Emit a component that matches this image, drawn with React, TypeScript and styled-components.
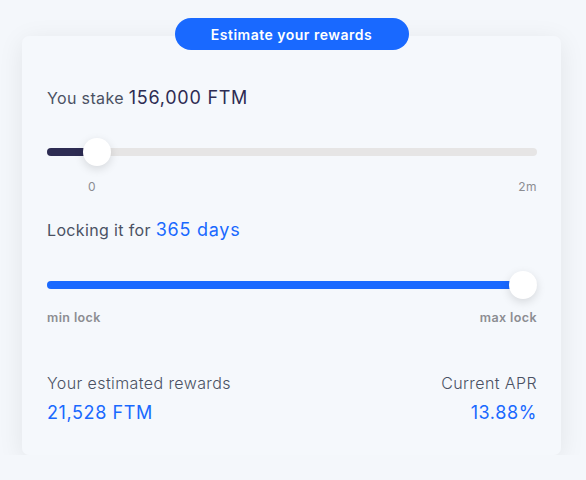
import React from "react";
import styled, { createGlobalStyle } from "styled-components";

//===============================
// @Global
//===============================
const GlobalStyle = createGlobalStyle`
  html, body {
    margin: 0;
    padding: 0;
    background: #f4f7fb;
    font-family: Inter, "Noto Sans", sans-serif;
  }
  * { box-sizing: border-box; }
`;

const BLUE = "#1969ff";
const NAVY = "#2d2c53";
const THUMB = 28;

//===============================
// @Styled
//===============================
const Page = styled.div`
  padding: 18px 25px 0 22px;
  display: flex;
  flex-direction: column;
  align-items: center;
`;

const Pill = styled.div`
  position: relative;
  z-index: 1;
  width: 234px;
  height: 32px;
  margin-bottom: -14px;
  border-radius: 16px;
  background: ${BLUE};
  color: #fff;
  font-size: 14px;
  font-weight: 600;
  display: flex;
  align-items: center;
  justify-content: center;
  letter-spacing: 0.5px;
`;

const Card = styled.div`
  align-self: stretch;
  background: #f5f8fc;
  border-radius: 7px;
  box-shadow: 0 5px 26px rgba(0, 0, 0, 0.08);
  padding: 50px 24px 30px 25px;
  display: flex;
  flex-direction: column;
`;

const Title = styled.div<{ $mt?: number }>`
  margin-top: ${(p) => p.$mt || 0}px;
  font-size: 16px;
  line-height: 24px;
  letter-spacing: 0.35px;
  color: #4a5163;
  white-space: nowrap;
`;

const Value = styled.span<{ $color: string }>`
  font-size: 18px;
  letter-spacing: 0.75px;
  color: ${(p) => p.$color};
`;

const SliderBox = styled.div<{ $mt: number }>`
  position: relative;
  height: ${THUMB}px;
  margin-top: ${(p) => p.$mt}px;
  display: flex;
  align-items: center;
`;

const Track = styled.div`
  width: 100%;
  height: 8px;
  border-radius: 4px;
  background: #e6e5e5;
  overflow: hidden;
`;

const Fill = styled.div<{ $color: string }>`
  height: 100%;
  background: ${(p) => p.$color};
`;

const Thumb = styled.div`
  position: absolute;
  top: 0;
  width: ${THUMB}px;
  height: ${THUMB}px;
  border-radius: 50%;
  background: #fff;
  box-shadow: 0 3px 10px rgba(0, 0, 0, 0.13);
`;

const Labels = styled.div<{ $mt: number; $bold?: boolean; $inset?: number }>`
  display: flex;
  justify-content: space-between;
  margin-top: ${(p) => p.$mt}px;
  padding-left: ${(p) => p.$inset || 0}px;
  font-size: ${(p) => (p.$bold ? 12.5 : 12)}px;
  line-height: 16px;
  letter-spacing: ${(p) => (p.$bold ? 0.4 : 0.4)}px;
  font-weight: ${(p) => (p.$bold ? 600 : 400)};
  color: #8c8d92;
`;

const Results = styled.div`
  margin-top: 47px;
  display: flex;
  justify-content: space-between;
`;

const ResultCol = styled.div<{ $right?: boolean }>`
  display: flex;
  flex-direction: column;
  align-items: ${(p) => (p.$right ? "flex-end" : "flex-start")};
`;

const ResultLabel = styled.div`
  font-size: 16px;
  line-height: 20px;
  font-weight: 300;
  letter-spacing: 0.4px;
  color: #4a5163;
`;

const ResultValue = styled.div`
  margin-top: 8px;
  font-size: 18px;
  line-height: 24px;
  letter-spacing: 0.6px;
  color: ${BLUE};
`;

//===============================
// @Component
//===============================
const Slider: React.FC<{ value: number; color: string; mt: number }> = ({ value, color, mt }) => {
  const left = `calc((100% - ${THUMB}px) * ${value / 100})`;
  return (
    <SliderBox $mt={mt}>
      <Track>
        <Fill $color={color} style={{ width: `calc(${left} + ${THUMB / 2}px)` }} />
      </Track>
      <Thumb style={{ left }} />
    </SliderBox>
  );
};

const App: React.FC = () => {
  const stake = 156000;
  const max = 2000000;
  const stakePct = 7.8;

  return (
    <>
      <GlobalStyle />
      <Page>
        <Pill>Estimate your rewards</Pill>
        <Card>
          <Title>
            You stake <Value $color={NAVY}>{stake.toLocaleString("en-US")} FTM</Value>
          </Title>
          <Slider value={stakePct} color={NAVY} mt={28} />
          <Labels $mt={13} $inset={41}>
            <span>0</span>
            <span>{max / 1000000}m</span>
          </Labels>

          <Title $mt={23}>
            Locking it for <Value $color={BLUE}>365 days</Value>
          </Title>
          <Slider value={100} color={BLUE} mt={29} />
          <Labels $mt={11} $bold>
            <span>min lock</span>
            <span>max lock</span>
          </Labels>

          <Results>
            <ResultCol>
              <ResultLabel>Your estimated rewards</ResultLabel>
              <ResultValue>21,528 FTM</ResultValue>
            </ResultCol>
            <ResultCol $right>
              <ResultLabel>Current APR</ResultLabel>
              <ResultValue>13.88%</ResultValue>
            </ResultCol>
          </Results>
        </Card>
      </Page>
    </>
  );
};

export default App;
